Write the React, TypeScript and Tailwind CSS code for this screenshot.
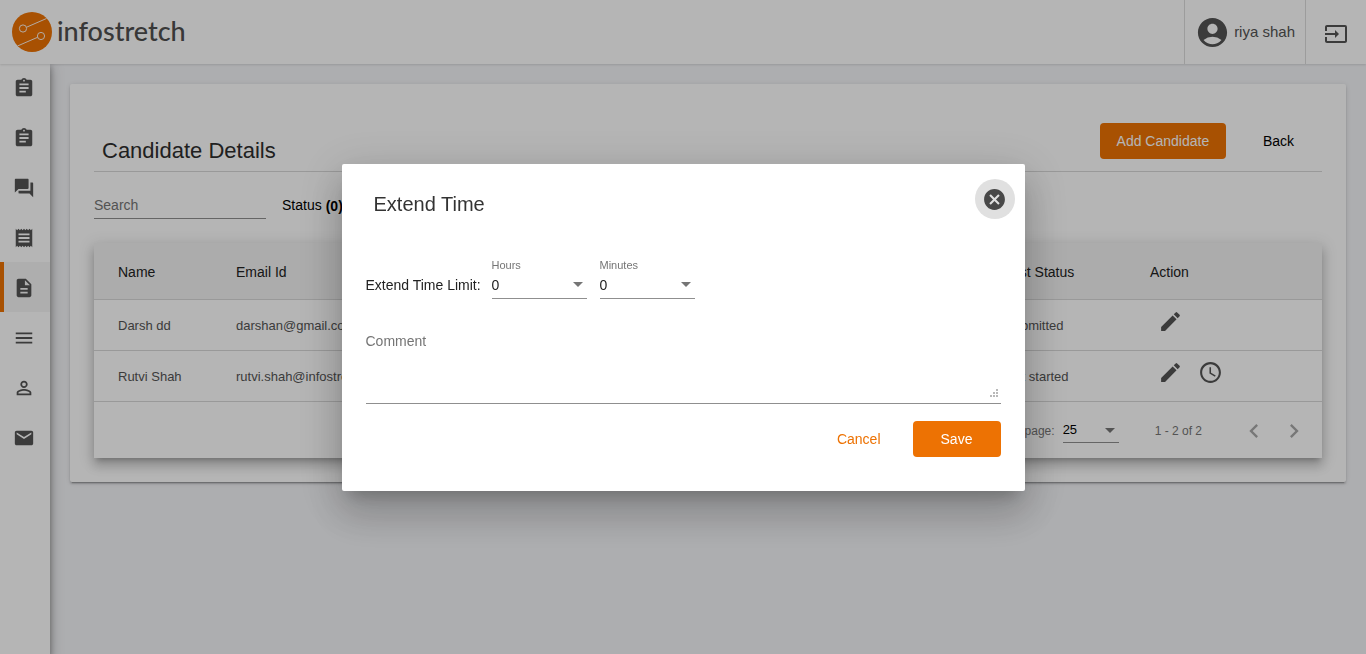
import React from "react";
import {
  MdAccessTime,
  MdAccountCircle,
  MdArrowDropDown,
  MdAssignment,
  MdCancel,
  MdChevronLeft,
  MdChevronRight,
  MdDescription,
  MdEdit,
  MdEmail,
  MdInput,
  MdMenu,
  MdPersonOutline,
  MdQuestionAnswer,
  MdReceipt,
} from "react-icons/md";

const NAV = [
  { label: "Tests", Icon: MdAssignment },
  { label: "Assignments", Icon: MdAssignment },
  { label: "Questions", Icon: MdQuestionAnswer },
  { label: "Receipts", Icon: MdReceipt },
  { label: "Candidates", Icon: MdDescription, active: true },
  { label: "Menu", Icon: MdMenu },
  { label: "Users", Icon: MdPersonOutline },
  { label: "Mail", Icon: MdEmail },
];

const ROWS = [
  { name: "Darsh dd", email: "darshan@gmail.com", status: "Submitted", extend: false },
  { name: "Rutvi Shah", email: "rutvi.shah@infostretch.com", status: "Not started", extend: true },
];

function Logo() {
  return (
    <a href="#" className="flex items-center gap-[5px] pl-3 text-[#4f4f4f]">
      <svg width="40" height="40" viewBox="0 0 40 40" aria-hidden="true">
        <circle cx="20" cy="20" r="20" fill="#ed7203" />
        <g fill="none" stroke="#fff" strokeWidth="0.9">
          <circle cx="11" cy="16.5" r="3.6" />
          <path d="M14.6 15.2 L34.5 6.5" />
          <circle cx="29" cy="24" r="3.6" />
          <path d="M25.6 25.3 L5.5 34" />
        </g>
      </svg>
      <span className="pb-0.5 font-['Lato',sans-serif] text-[27px] leading-8 font-medium">infostretch</span>
    </a>
  );
}

function Header() {
  return (
    <header className="relative z-20 flex h-16 items-stretch justify-between bg-white text-[#545454] shadow-[0_1px_2px_rgba(0,0,0,0.12)]">
      <Logo />
      <div className="flex">
        <div className="flex items-center gap-1 border-l border-[#dcdcdc] px-2.5">
          <MdAccountCircle size={35} />
          <span className="text-[15px]">riya shah</span>
        </div>
        <button aria-label="Log out" className="flex w-[61px] items-center justify-center border-l border-[#dcdcdc] pt-1">
          <MdInput size={24} />
        </button>
      </div>
    </header>
  );
}

function Sidebar() {
  return (
    <nav className="relative z-10 -mt-0.5 w-[50px] shrink-0 bg-white text-[#545454] shadow-[0_5px_5px_-3px_rgba(0,0,0,0.2),0_8px_10px_1px_rgba(0,0,0,0.14),0_3px_14px_2px_rgba(0,0,0,0.12),2px_4px_4px_rgba(0,0,0,0.15)]">
      {NAV.map(({ label, Icon, active }) => (
        <a
          key={label}
          href="#"
          aria-label={label}
          className={
            active
              ? "flex h-[50px] items-center border-l-4 border-[#ed7203] bg-[#f5f5f5] pt-px pl-[9px]"
              : "flex h-[50px] items-center border-l-4 border-transparent pt-px pl-[9px]"
          }
        >
          <Icon size={22} />
        </a>
      ))}
    </nav>
  );
}

function CandidateTable() {
  return (
    <div className="mt-6 bg-white shadow-[0_5px_5px_-3px_rgba(0,0,0,0.2),0_8px_10px_1px_rgba(0,0,0,0.14),0_3px_14px_2px_rgba(0,0,0,0.12)]">
      <table className="w-full table-fixed text-left">
        <thead className="bg-[#f2f2f2] text-sm text-[#222]">
          <tr className="h-14 border-b border-[#d8d8d8]">
            <th className="w-[142px] pt-0.5 pl-6 font-normal">Name</th>
            <th className="pt-0.5 font-normal">Email Id</th>
            <th className="w-[145px] pt-0.5 font-normal">Test Status</th>
            <th className="w-[172px] pt-0.5 font-normal">Action</th>
          </tr>
        </thead>
        <tbody className="text-[13px] text-[#545454]">
          {ROWS.map((row) => (
            <tr key={row.name} className="h-[51px] border-b border-[#d8d8d8]">
              <td className="pt-0.5 pl-6">{row.name}</td>
              <td className="pt-0.5">{row.email}</td>
              <td className="pt-0.5">{row.status}</td>
              <td>
                <div className="flex pb-1.5">
                  <button aria-label="Edit" className="flex w-10 justify-center">
                    <MdEdit size={25} />
                  </button>
                  {row.extend && (
                    <button aria-label="Extend time" className="flex w-10 justify-center">
                      <MdAccessTime size={25} />
                    </button>
                  )}
                </div>
              </td>
            </tr>
          ))}
        </tbody>
      </table>
      <div className="flex h-14 items-center justify-end pt-0.5 pr-2 text-xs text-[#757575]">
        <label htmlFor="page-size">Items per page:</label>
        <div className="relative ml-2 w-14 text-[#757575]">
          <select
            id="page-size"
            defaultValue="25"
            className="block h-6 w-full appearance-none border-b border-[#8f8f8f] text-[13px] text-black outline-none"
          >
            <option>25</option>
          </select>
          <MdArrowDropDown size={24} className="pointer-events-none absolute -top-px -right-[3px]" />
        </div>
        <span className="mr-8 ml-9">1 - 2 of 2</span>
        <button aria-label="Previous page" disabled className="flex w-10 justify-center text-[#a8a8a8]">
          <MdChevronLeft size={28} />
        </button>
        <button aria-label="Next page" disabled className="flex w-10 justify-center text-[#a8a8a8]">
          <MdChevronRight size={28} />
        </button>
      </div>
    </div>
  );
}

function TimeSelect({ id, label }: { id: string; label: string }) {
  return (
    <div className="w-[95px]">
      <label htmlFor={id} className="block text-[11px] leading-3 text-[#757575]">
        {label}
      </label>
      <div className="relative">
        <select
          id={id}
          defaultValue="0"
          className="block h-7 w-full appearance-none border-b border-[#8f8f8f] pt-0.5 text-sm text-[#222] outline-none"
        >
          <option>0</option>
        </select>
        <MdArrowDropDown size={24} className="pointer-events-none absolute top-px -right-[3px] text-[#757575]" />
      </div>
    </div>
  );
}

function ExtendTimeDialog() {
  return (
    <div className="fixed inset-0 z-30 flex items-center justify-center bg-black/29">
      <div
        role="dialog"
        aria-labelledby="dialog-title"
        className="w-1/2 rounded-xs bg-white px-6 pt-[15px] pb-[34px] shadow-[0_11px_15px_-7px_rgba(0,0,0,0.2),0_24px_38px_3px_rgba(0,0,0,0.14),0_9px_46px_8px_rgba(0,0,0,0.12)]"
      >
        <div className="-mr-3.5 flex items-start justify-between pl-2">
          <h2 id="dialog-title" className="pt-[11px] text-xl text-[#333]">
            Extend Time
          </h2>
          <button
            aria-label="Close"
            className="flex size-10 items-center justify-center rounded-full bg-[#e0e0e0] pt-0.5 text-[#484848]"
          >
            <MdCancel size={25} />
          </button>
        </div>
        <div className="mt-10 flex items-end">
          <span className="w-[126px] pb-1 text-sm text-[#222]">Extend Time Limit:</span>
          <div className="flex gap-[13px]">
            <TimeSelect id="hours" label="Hours" />
            <TimeSelect id="minutes" label="Minutes" />
          </div>
        </div>
        <div className="relative mt-8">
          <textarea
            aria-label="Comment"
            placeholder="Comment"
            className="block h-[73px] w-full resize-none border-b border-[#8f8f8f] text-sm text-[#222] outline-none placeholder:text-[#757575]"
          />
          <svg width="8" height="8" viewBox="0 0 8 8" fill="#b9b9b9" className="pointer-events-none absolute right-[3px] bottom-[7px]" aria-hidden="true">
            <path d="M6 0h2v2H6zM3 3h2v2H3zM6 3h2v2H6zM0 6h2v2H0zM3 6h2v2H3zM6 6h2v2H6z" />
          </svg>
        </div>
        <div className="mt-[17px] flex justify-end gap-4 text-sm">
          <button className="h-9 px-4 text-[#ed7203]">Cancel</button>
          <button className="h-9 w-[88px] rounded bg-[#ed7203] text-white">Save</button>
        </div>
      </div>
    </div>
  );
}

export default function App() {
  return (
    <div className="flex min-h-screen flex-col bg-[#f4f5f8] font-['Liberation_Sans',Arial,sans-serif]">
      <Header />
      <div className="flex flex-1">
        <Sidebar />
        <main className="min-w-0 flex-1 p-5">
          <section className="rounded-xs bg-white p-6 shadow-[0_3px_1px_-2px_rgba(0,0,0,0.2),0_2px_2px_0_rgba(0,0,0,0.14),0_1px_5px_0_rgba(0,0,0,0.12)]">
            <div className="flex items-end justify-between border-b border-[#d8d8d8] px-2 pt-[15px]">
              <h1 className="pb-1 text-[22px] leading-8 text-[#2e2e2e]">Candidate Details</h1>
              <div className="flex gap-[21px] pr-1 pb-3 text-sm">
                <button className="h-9 w-[126px] rounded bg-[#ed7203] text-white">Add Candidate</button>
                <button className="h-9 px-4 text-black">Back</button>
              </div>
            </div>
            <div className="mt-5 flex items-start gap-4 text-sm">
              <input
                aria-label="Search"
                placeholder="Search"
                className="h-[27px] w-[172px] border-b border-[#8f8f8f] outline-none placeholder:text-[#757575]"
              />
              <div className="flex items-start gap-1 pt-[3px] text-black">
                Status <b className="pt-px">(0)</b>
              </div>
            </div>
            <CandidateTable />
          </section>
        </main>
      </div>
      <ExtendTimeDialog />
    </div>
  );
}
